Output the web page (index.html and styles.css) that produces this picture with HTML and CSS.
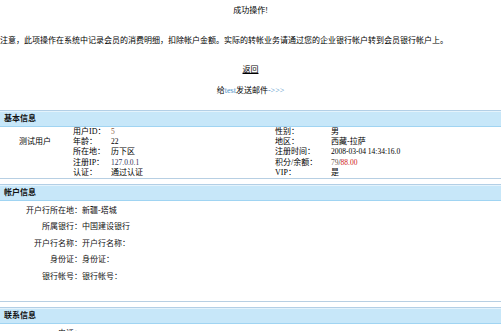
FILE: index.html
```html
<!DOCTYPE html>
<html lang="zh-CN">
<head>
<meta charset="utf-8">
<title>成功操作</title>
<link rel="stylesheet" href="styles.css">
</head>
<body>
<div class="msg">
  <div class="title">成功操作!</div>
  <div class="note">注意，此项操作在系统中记录会员的消费明细，扣除帐户金额。实际的转帐业务请通过您的企业银行帐户转到会员银行帐户上。</div>
  <div class="back"><a href="#">返回</a></div>
  <div class="mail">给<span class="link">test</span>发送邮件<span class="link">-&gt;&gt;&gt;</span></div>
</div>

<section class="section">
  <div class="head">基本信息</div>
  <div class="basic">
    <div class="name">测试用户</div>
    <div class="k1">用户ID：</div><div class="v1 num id">5</div><div class="k2">性别：</div><div class="v2">男</div>
    <div class="k1">年龄：</div><div class="v1 num">22</div><div class="k2">地区：</div><div class="v2">西藏-拉萨</div>
    <div class="k1">所在地：</div><div class="v1">历下区</div><div class="k2">注册时间：</div><div class="v2 num">2008-03-04 14:34:16.0</div>
    <div class="k1">注册IP：</div><div class="v1 num ip">127.0.0.1</div><div class="k2">积分/余额：</div><div class="v2 num"><span class="score">79</span>/<span class="money">88.00</span></div>
    <div class="k1">认证：</div><div class="v1">通过认证</div><div class="k2">VIP：</div><div class="v2">是</div>
  </div>
</section>

<section class="section">
  <div class="head">帐户信息</div>
  <div class="info account">
    <div class="lab">开户行所在地：</div><div class="val">新疆-塔城</div>
    <div class="lab">所属银行：</div><div class="val">中国建设银行</div>
    <div class="lab">开户行名称：</div><div class="val">开户行名称：</div>
    <div class="lab">身份证：</div><div class="val">身份证：</div>
    <div class="lab">银行帐号：</div><div class="val">银行帐号：</div>
  </div>
</section>

<section class="section">
  <div class="head">联系信息</div>
  <div class="info">
    <div class="lab">电话：</div><div class="val"></div>
  </div>
</section>
</body>
</html>
```

FILE: styles.css
```css
html {
  overflow: hidden;
}

body {
  margin: 0;
  background: #fff;
  color: #000;
  font-family: "Liberation Serif", "Noto Sans CJK SC", serif;
  font-size: 8px;
}

.title {
  height: 22px;
  line-height: 22px;
  text-align: center;
}

.note {
  margin-top: 8px;
  height: 22px;
  line-height: 22px;
  white-space: nowrap;
}

.back {
  margin-top: 8px;
  height: 20px;
  line-height: 20px;
  text-align: center;
}

.back a {
  color: #000;
  text-decoration: underline;
}

.mail {
  margin-top: 1px;
  height: 20px;
  line-height: 20px;
  text-align: center;
}

.link {
  color: #4a8fc6;
}

.section {
  margin-top: 5px;
  border-bottom: 1px solid #b7cfe3;
}

.msg + .section {
  margin-top: 9px;
}

.head {
  height: 15px;
  line-height: 15px;
  padding-left: 4px;
  border-top: 1px solid #b3cfe6;
  border-bottom: 1px solid #a0d4f2;
  background: #c7e7f9;
  box-shadow: inset 0 1px 0 #e4f3fc;
  font-weight: bold;
  color: #111;
}

.basic {
  display: grid;
  grid-template-columns: 73px 38px 164px 56px 1fr;
  grid-template-rows: 10px 10px 10px 11px 10px;
}

.basic > div {
  line-height: 8px;
  align-self: center;
  white-space: nowrap;
}

.basic .name {
  grid-column: 1;
  grid-row: 1 / span 3;
  padding-left: 19px;
}

.k1 { grid-column: 2; }
.v1 { grid-column: 3; }
.k2 { grid-column: 4; }
.v2 { grid-column: 5; }

.num {
  font-size: 7.5px;
}

.id {
  color: #8a5a3c;
}

.ip {
  color: #33335a;
}

.score {
  color: #6a5a50;
}

.money {
  color: #d02020;
}

.info {
  display: grid;
  grid-template-columns: 82px 1fr;
  grid-auto-rows: 16.5px;
  align-items: center;
}

.account {
  min-height: 100px;
  align-content: start;
}

.lab {
  text-align: right;
  white-space: nowrap;
  color: #111;
}

.val {
  white-space: nowrap;
  color: #111;
}
```
